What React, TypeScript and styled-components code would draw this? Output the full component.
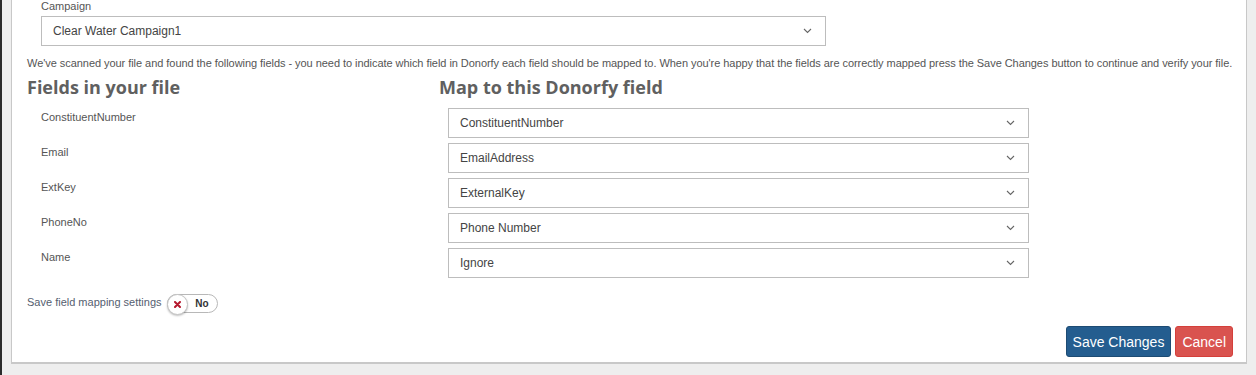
import styled, { createGlobalStyle } from 'styled-components';

const GlobalStyle = createGlobalStyle`
  html, body {
    margin: 0;
    padding: 0;
    background: #eeeeee;
  }
  body {
    font-family: "Liberation Sans", Arial, sans-serif;
  }
`;

const Page = styled.div`
  border-left: 2px solid #2b2b2b;
  padding: 0 9px 11px 9px;
  height: 375px;
  box-sizing: border-box;
`;

const Panel = styled.div`
  background: #fff;
  border: 1px solid #c8c8c8;
  border-top: none;
  border-bottom-width: 2px;
  padding: 0 13px 5px 15px;
  height: 364px;
  box-sizing: border-box;
  display: flex;
  flex-direction: column;
`;

const CampaignGroup = styled.div`
  padding-left: 14px;
`;

const SmallLabel = styled.label`
  display: block;
  font-size: 11px;
  line-height: 13px;
  color: #555;
  margin-bottom: 3px;
`;

const SelectBox = styled.div<{ $width: number; $height?: number }>`
  width: ${(p) => p.$width}px;
  height: ${(p) => p.$height ?? 30}px;
  box-sizing: border-box;
  border: 1px solid #bdbdbd;
  display: flex;
  align-items: center;
  justify-content: space-between;
  padding: 0 13px 0 11px;
  font-size: 12px;
  color: #444;
`;

const Description = styled.p`
  margin: 10px 0 0 0;
  font-size: 11px;
  line-height: 15px;
  color: #555;
  letter-spacing: -0.05px;
  white-space: nowrap;
`;

const Columns = styled.div`
  display: grid;
  grid-template-columns: 412px 1fr;
`;

const Heading = styled.h2`
  margin: 0;
  font-family: "Open Sans", sans-serif;
  font-weight: 700;
  font-size: 18px;
  line-height: 26px;
  color: #606060;
`;

const HeadingRow = styled(Columns)`
  margin-top: 3px;
`;

const MapRows = styled.div`
  margin-top: 8px;
  display: flex;
  flex-direction: column;
  gap: 5px;
`;

const MapRow = styled(Columns)`
  height: 30px;
`;

const FieldName = styled.div`
  padding: 3px 0 0 14px;
  font-size: 11px;
  line-height: 13px;
  color: #555;
`;

const SelectCell = styled.div`
  padding-left: 9px;
`;

const ToggleRow = styled.div`
  display: flex;
  align-items: flex-start;
  gap: 5px;
  margin-top: 16px;
`;

const ToggleLabel = styled.span`
  font-size: 11px;
  line-height: 13px;
  color: #556070;
  margin-top: 2px;
`;

const Toggle = styled.div`
  position: relative;
  width: 51px;
  height: 19px;
  box-sizing: border-box;
  border: 1px solid #b8b8b8;
  border-radius: 10px;
  background: #fff;
  display: flex;
  align-items: center;
  justify-content: flex-end;
  padding-right: 8px;
  font-size: 10px;
  font-weight: 700;
  color: #333;
`;

const Knob = styled.span`
  position: absolute;
  left: -1px;
  top: -1px;
  width: 19px;
  height: 19px;
  border-radius: 50%;
  background: #fff;
  border: 1px solid #c4c4c4;
  box-shadow: 0 1px 2px rgba(0, 0, 0, 0.25);
  display: flex;
  align-items: center;
  justify-content: center;
`;

const Actions = styled.div`
  margin-top: auto;
  display: flex;
  justify-content: flex-end;
  gap: 4px;
`;

const Button = styled.button<{ $variant: 'primary' | 'danger' }>`
  height: 31px;
  padding: 0 6px;
  border-radius: 3px;
  font-family: "Liberation Sans", Arial, sans-serif;
  font-size: 14px;
  color: #fff;
  cursor: pointer;
  background: ${(p) => (p.$variant === 'primary' ? '#245d8f' : '#d9534f')};
  border: 1px solid ${(p) => (p.$variant === 'primary' ? '#1d4b73' : '#d43f3a')};
`;

const Chevron = () => (
  <svg width="9" height="6" viewBox="0 0 9 6">
    <path d="M1 1 L4.5 4.5 L8 1" fill="none" stroke="#666" strokeWidth="1.1" />
  </svg>
);

const Cross = () => (
  <svg width="7" height="7" viewBox="0 0 7 7">
    <path d="M1 1 L6 6 M6 1 L1 6" stroke="#b5182e" strokeWidth="2" strokeLinecap="round" />
  </svg>
);

const mappings = [
  { field: 'ConstituentNumber', target: 'ConstituentNumber' },
  { field: 'Email', target: 'EmailAddress' },
  { field: 'ExtKey', target: 'ExternalKey' },
  { field: 'PhoneNo', target: 'Phone Number' },
  { field: 'Name', target: 'Ignore' },
];

export default function App() {
  return (
    <>
      <GlobalStyle />
      <Page>
        <Panel>
          <CampaignGroup>
            <SmallLabel>Campaign</SmallLabel>
            <SelectBox $width={785}>
              Clear Water Campaign1
              <Chevron />
            </SelectBox>
          </CampaignGroup>

          <Description>
            We've scanned your file and found the following fields - you need to indicate which field in Donorfy each field should be mapped to. When you're happy that the fields are correctly mapped press the Save Changes button to continue and verify your file.
          </Description>

          <HeadingRow>
            <Heading>Fields in your file</Heading>
            <Heading>Map to this Donorfy field</Heading>
          </HeadingRow>

          <MapRows>
            {mappings.map((m) => (
              <MapRow key={m.field}>
                <FieldName>{m.field}</FieldName>
                <SelectCell>
                  <SelectBox $width={581}>
                    {m.target}
                    <Chevron />
                  </SelectBox>
                </SelectCell>
              </MapRow>
            ))}
          </MapRows>

          <ToggleRow>
            <ToggleLabel>Save field mapping settings</ToggleLabel>
            <Toggle>
              <Knob>
                <Cross />
              </Knob>
              No
            </Toggle>
          </ToggleRow>

          <Actions>
            <Button $variant="primary">Save Changes</Button>
            <Button $variant="danger">Cancel</Button>
          </Actions>
        </Panel>
      </Page>
    </>
  );
}
